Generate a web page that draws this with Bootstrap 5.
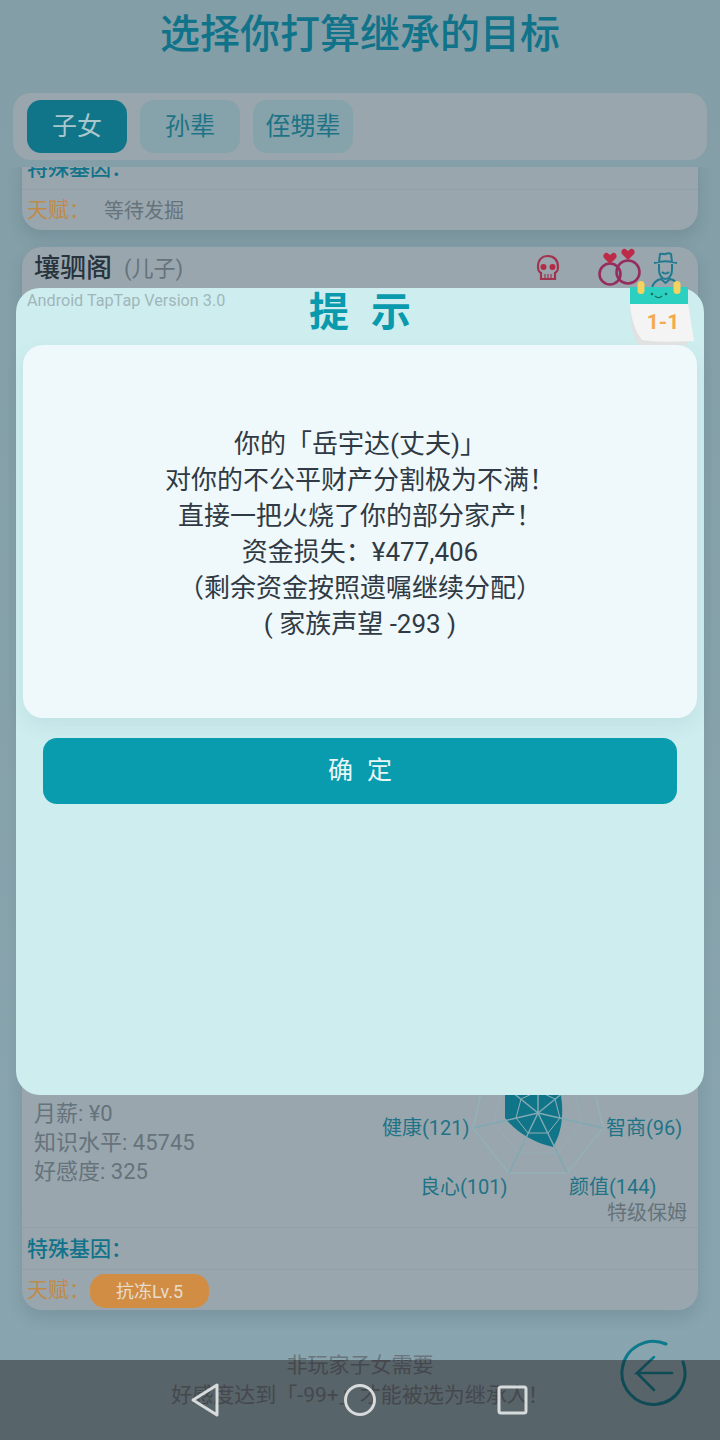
<!DOCTYPE html>
<html lang="zh-CN">
<head>
    <meta charset="UTF-8">
    <meta name="viewport" content="width=device-width, initial-scale=1.0">
    <title>选择你打算继承的目标</title>
    <link href="https://cdn.jsdelivr.net/npm/bootstrap@5.3.0/dist/css/bootstrap.min.css" rel="stylesheet">
    <style>
        html, body { margin: 0; height: 100%; }
        body {
            font-family: Roboto, "Noto Sans CJK SC", sans-serif;
            background: #86a0a8;
        }
        .game-page {
            width: 720px;
            height: 1440px;
            overflow: hidden;
            background: linear-gradient(#839ea6, #89a5af);
        }
        .page-title {
            height: 93px;
            padding-top: 9px;
            margin: 0;
            font-size: 40px;
            line-height: 52px;
            font-weight: 500;
            text-align: center;
            color: #10738a;
        }
        .tab-panel {
            height: 67px;
            margin: 0 13px;
            padding: 7px 14px;
            gap: 13px;
            background: #99a6ae;
            border-radius: 18px;
        }
        .tab-btn {
            width: 100px;
            height: 53px;
            padding: 0;
            border: 0;
            border-radius: 14px;
            font-size: 25px;
            background: #86a3ab;
            color: #1f7386;
            transition: none;
        }
        .tab-btn.is-active, .tab-btn.is-active:hover { background: #117589; color: #a9c8ce; }
        .heir-list {
            height: 1163px;
            margin-top: 7px;
            padding: 0 22px;
            overflow: hidden;
            gap: 17px;
        }
        .heir-card {
            flex: none;
            background: #99a6ae;
            border: 0;
            border-radius: 20px;
            color: #66737b;
            box-shadow: 0 8px 16px rgba(30, 60, 70, .14);
        }
        .heir-card.scrolled { margin-top: -20px; }
        .heir-card.grown { height: 1063px; }
        .heir-head { height: 42px; padding: 0 16px 0 12px; }
        .heir-name { font-size: 26px; font-weight: 500; color: #27333d; }
        .heir-role { font-size: 22px; margin-left: 12px; }
        .heir-stats { font-size: 22px; line-height: 29px; padding: 30px 0 0 12px; }
        .job-line { font-size: 20px; line-height: 26px; text-align: right; padding: 9px 11px 0 0; height: 36px; }
        .gene-row {
            height: 43px;
            padding: 2px 0 0 5px;
            font-size: 21px;
            font-weight: 500;
            color: #10738a;
            border-top: 1px solid #939fa7;
            border-bottom: 1px solid #939fa7;
        }
        .talent-row { height: 40px; padding: 2px 0 0 5px; font-size: 20px; }
        .talent-label { color: #c08a48; width: 63px; font-size: 21px; }
        .talent-hint { margin-left: 14px; }
        .talent-pill {
            width: 119px;
            height: 34px;
            background: #d28d45;
            color: #e6dccd;
            border-radius: 15px;
            font-size: 18px;
        }
        .radar-wrap { width: 352px; height: 122px; }
        .radar-wrap svg { display: block; overflow: visible; }
        .radar-label { font-size: 20px; fill: #1f7386; font-family: Roboto, "Noto Sans CJK SC", sans-serif; }
        .foot-note {
            height: 110px;
            padding-top: 20px;
            font-size: 21px;
            line-height: 30px;
            text-align: center;
            color: #6a757d;
        }
        .back-arrow { top: 1339px; left: 620px; }
        .sys-bar {
            top: 1360px;
            left: 0;
            width: 720px;
            height: 80px;
            background: rgba(20, 10, 10, .42);
        }
        .sys-icons { top: 1380px; left: 0; }
        .dialog-box {
            top: 288px;
            left: 16px;
            width: 688px;
            height: 807px;
            padding: 0 7px;
            background: #ceedef;
            border: 0;
            border-radius: 24px;
        }
        .build-tag { top: 3px; left: 11px; font-size: 16.200px; line-height: 19px; color: #a0b6ba; }
        .dialog-title {
            height: 57px;
            margin: 0;
            font-size: 40px;
            line-height: 50px;
            font-weight: 700;
            text-align: center;
            color: #0a9aad;
            word-spacing: 12px;
        }
        .dialog-body {
            height: 373px;
            padding-top: 81px;
            background: #eff8fa;
            border-radius: 20px;
            box-shadow: 0 8px 20px rgba(40, 90, 100, .08);
            font-size: 26px;
            line-height: 36px;
            text-align: center;
            color: #2f3a44;
        }
        .confirm-btn {
            display: block;
            width: 634px;
            height: 66px;
            margin: 20px auto 0;
            border: 0;
            border-radius: 14px;
            font-size: 25px;
            background: #099bae;
            color: #e8f7f8;
            word-spacing: 8px;
            transition: none;
        }
        .confirm-btn:hover { background: #099bae; color: #e8f7f8; }
        .date-sticker { top: 280px; left: 628px; }
        .date-num { font-family: Roboto, sans-serif; }
    </style>
</head>
<body>
    <div class="game-page position-relative">
        <h1 class="page-title">选择你打算继承的目标</h1>

        <!-- Tabs -->
        <div class="tab-panel d-flex">
            <button class="btn tab-btn is-active">子女</button>
            <button class="btn tab-btn">孙辈</button>
            <button class="btn tab-btn">侄甥辈</button>
        </div>

        <!-- Heir list -->
        <div class="heir-list d-flex flex-column">
            <div class="card heir-card scrolled">
                <div class="gene-row d-flex align-items-center border-top-0">特殊基因&#xFF1A;</div>
                <div class="talent-row d-flex align-items-center">
                    <span class="talent-label">天赋&#xFF1A;</span>
                    <span class="talent-hint">等待发掘</span>
                </div>
            </div>

            <div class="card heir-card grown">
                <div class="heir-head d-flex align-items-center">
                    <span class="heir-name">壤驷阁</span>
                    <span class="heir-role">(儿子)</span>
                    <svg class="ms-auto" width="150" height="42" viewBox="0 0 150 42" fill="none">
                        <!-- skull -->
                        <g stroke="#a0344f" stroke-width="2.200">
                            <path d="M6 20c0-7 4-11 10-11s10 4 10 11c0 3-1 5-3 6v6H9v-6c-2-1-3-3-3-6z"/>
                            <path d="M13 27v5M16 27v5M19 27v5" stroke-width="1.200"/>
                        </g>
                        <circle cx="11.500" cy="20" r="3" fill="#b52a45"/>
                        <circle cx="20.500" cy="20" r="3" fill="#b52a45"/>
                        <!-- rings -->
                        <circle cx="78" cy="27" r="10.500" stroke="#962c5e" stroke-width="2.600"/>
                        <circle cx="96" cy="25" r="11.500" stroke="#962c5e" stroke-width="2.600"/>
                        <path d="M78 17l-6-6c-2-3 1-6 3.500-5l2.500 2 2.500-2c2.500-1 5.500 2 3.500 5z" fill="#bc2c48"/>
                        <path d="M96 13l-6-6c-2-3 1-6 3.500-5l2.500 2 2.500-2c2.500-1 5.500 2 3.500 5z" fill="#bc2c48"/>
                        <!-- man with hat -->
                        <g stroke="#1f7a90" stroke-width="2">
                            <path d="M122 16c7-2 16-2 23 0M127 15l1-8c3-1 4 1 5.500 0 2-1 4-1 5.500 0l1 8"/>
                            <path d="M127 17v6c0 5 3 9 6.500 9s6.500-4 6.500-9v-6"/>
                            <path d="M130 25c2 2 5 2 7 0"/>
                            <path d="M120 42c0-5 4-9 9-10l4.500 4 4.500-4c5 1 9 5 9 10"/>
                        </g>
                    </svg>
                </div>

                <div class="flex-grow-1"></div>

                <div class="d-flex justify-content-between align-items-end">
                    <div class="heir-stats align-self-start">
                        <div>月薪: ¥0</div>
                        <div>知识水平: 45745</div>
                        <div>好感度: 325</div>
                    </div>
                    <div class="radar-wrap">
                        <svg width="352" height="122" viewBox="0 -16 352 122" fill="none">
                            <path d="M159 -16L159 33C170 47 188 58 207 62C214 50 217 38 216 19L212 -16z" fill="#117589"/>
                            <g stroke="#96aeb5" stroke-width="2">
                                <path d="M192 -39l52 25 13 57-36 45h-58l-36-45 13-57z"/>
                            </g>
                            <g stroke="#96aeb5" stroke-width="1">
                                <path d="M192 -17L227 0L236 38L212 68H172L148 38L157 0z"/>
                                <path d="M192 6L209 14L214 33L202 48H182L170 33L175 14z"/>
                            </g>
                            <path d="M192 28V-39M192 28L244 -14M192 28L257 43M192 28L221 88M192 28L163 88M192 28L127 43M192 28L140 -14" stroke="#7fa9b3" stroke-width="1.500"/>
                            <text class="radar-label" x="36" y="50">健康(121)</text>
                            <text class="radar-label" x="260" y="50">智商(96)</text>
                            <text class="radar-label" x="74" y="109">良心(101)</text>
                            <text class="radar-label" x="223" y="109">颜值(144)</text>
                        </svg>
                    </div>
                </div>
                <div class="job-line">特级保姆</div>
                <div class="gene-row d-flex align-items-center">特殊基因&#xFF1A;</div>
                <div class="talent-row d-flex align-items-center">
                    <span class="talent-label">天赋&#xFF1A;</span>
                    <span class="talent-pill d-flex align-items-center justify-content-center">抗冻Lv.5</span>
                </div>
            </div>
        </div>

        <div class="foot-note">非玩家子女需要<br>好感度达到「-99+」才能被选为继承人&#xFF01;</div>

        <svg class="back-arrow position-absolute" width="68" height="68" viewBox="620 1339 68 68" fill="none" stroke="#0d7a8c" stroke-width="3" stroke-linecap="round">
            <path d="M666 1344A31.500 31.500 0 1 0 683 1362"/>
            <path d="M672 1373H637L654 1357M637 1373l17 17" stroke-width="2.500"/>
        </svg>

        <!-- Dialog -->
        <div class="card dialog-box position-absolute">
            <span class="build-tag position-absolute">Android TapTap Version 3.0</span>
            <h2 class="dialog-title">提 示</h2>
            <div class="dialog-body">
                你的「岳宇达(丈夫)」<br>
                对你的不公平财产分割极为不满&#xFF01;<br>
                直接一把火烧了你的部分家产&#xFF01;<br>
                资金损失&#xFF1A;¥477,406<br>
                &#xFF08;剩余资金按照遗嘱继续分配&#xFF09;<br>
                ( 家族声望 -293 )
            </div>
            <button class="btn confirm-btn">确 定</button>
        </div>

        <svg class="date-sticker position-absolute" width="70" height="68" viewBox="0 0 70 68" fill="none">
            <path d="M2 23h58v42H12c-6-2-10-20-10-42z" fill="#dfe2e1"/>
            <path d="M2 23h58l6 38c-20 1-40 1-52-1C8 53 3 40 2 23z" fill="#f3f4f3"/>
            <rect x="2" y="7" width="58" height="17" fill="#2bd0c0"/>
            <rect x="9.500" y="1" width="7" height="13" rx="3.500" fill="#f4d35e"/>
            <rect x="45.500" y="1" width="7" height="13" rx="3.500" fill="#f4d35e"/>
            <circle cx="24" cy="14" r="1.300" fill="#14705f"/>
            <circle cx="38" cy="14" r="1.300" fill="#14705f"/>
            <path d="M27 16c2 2 5 2 7 0" stroke="#14705f" stroke-width="1.300"/>
            <text class="date-num" x="35" y="49" text-anchor="middle" font-size="21" font-weight="700" fill="#f6a94c">1-1</text>
        </svg>

        <!-- Android nav bar -->
        <div class="sys-bar position-absolute"></div>
        <svg class="sys-icons position-absolute" width="720" height="40" viewBox="0 1380 720 40" fill="none" stroke="#d8dbdc" stroke-width="3" stroke-linejoin="round">
            <path d="M193 1400l24-15v30z"/>
            <circle cx="360" cy="1400" r="14.500"/>
            <rect x="499" y="1387" width="27" height="26" rx="2"/>
        </svg>
    </div>

    <script src="https://cdn.jsdelivr.net/npm/bootstrap@5.3.0/dist/js/bootstrap.bundle.min.js"></script>
</body>
</html>
